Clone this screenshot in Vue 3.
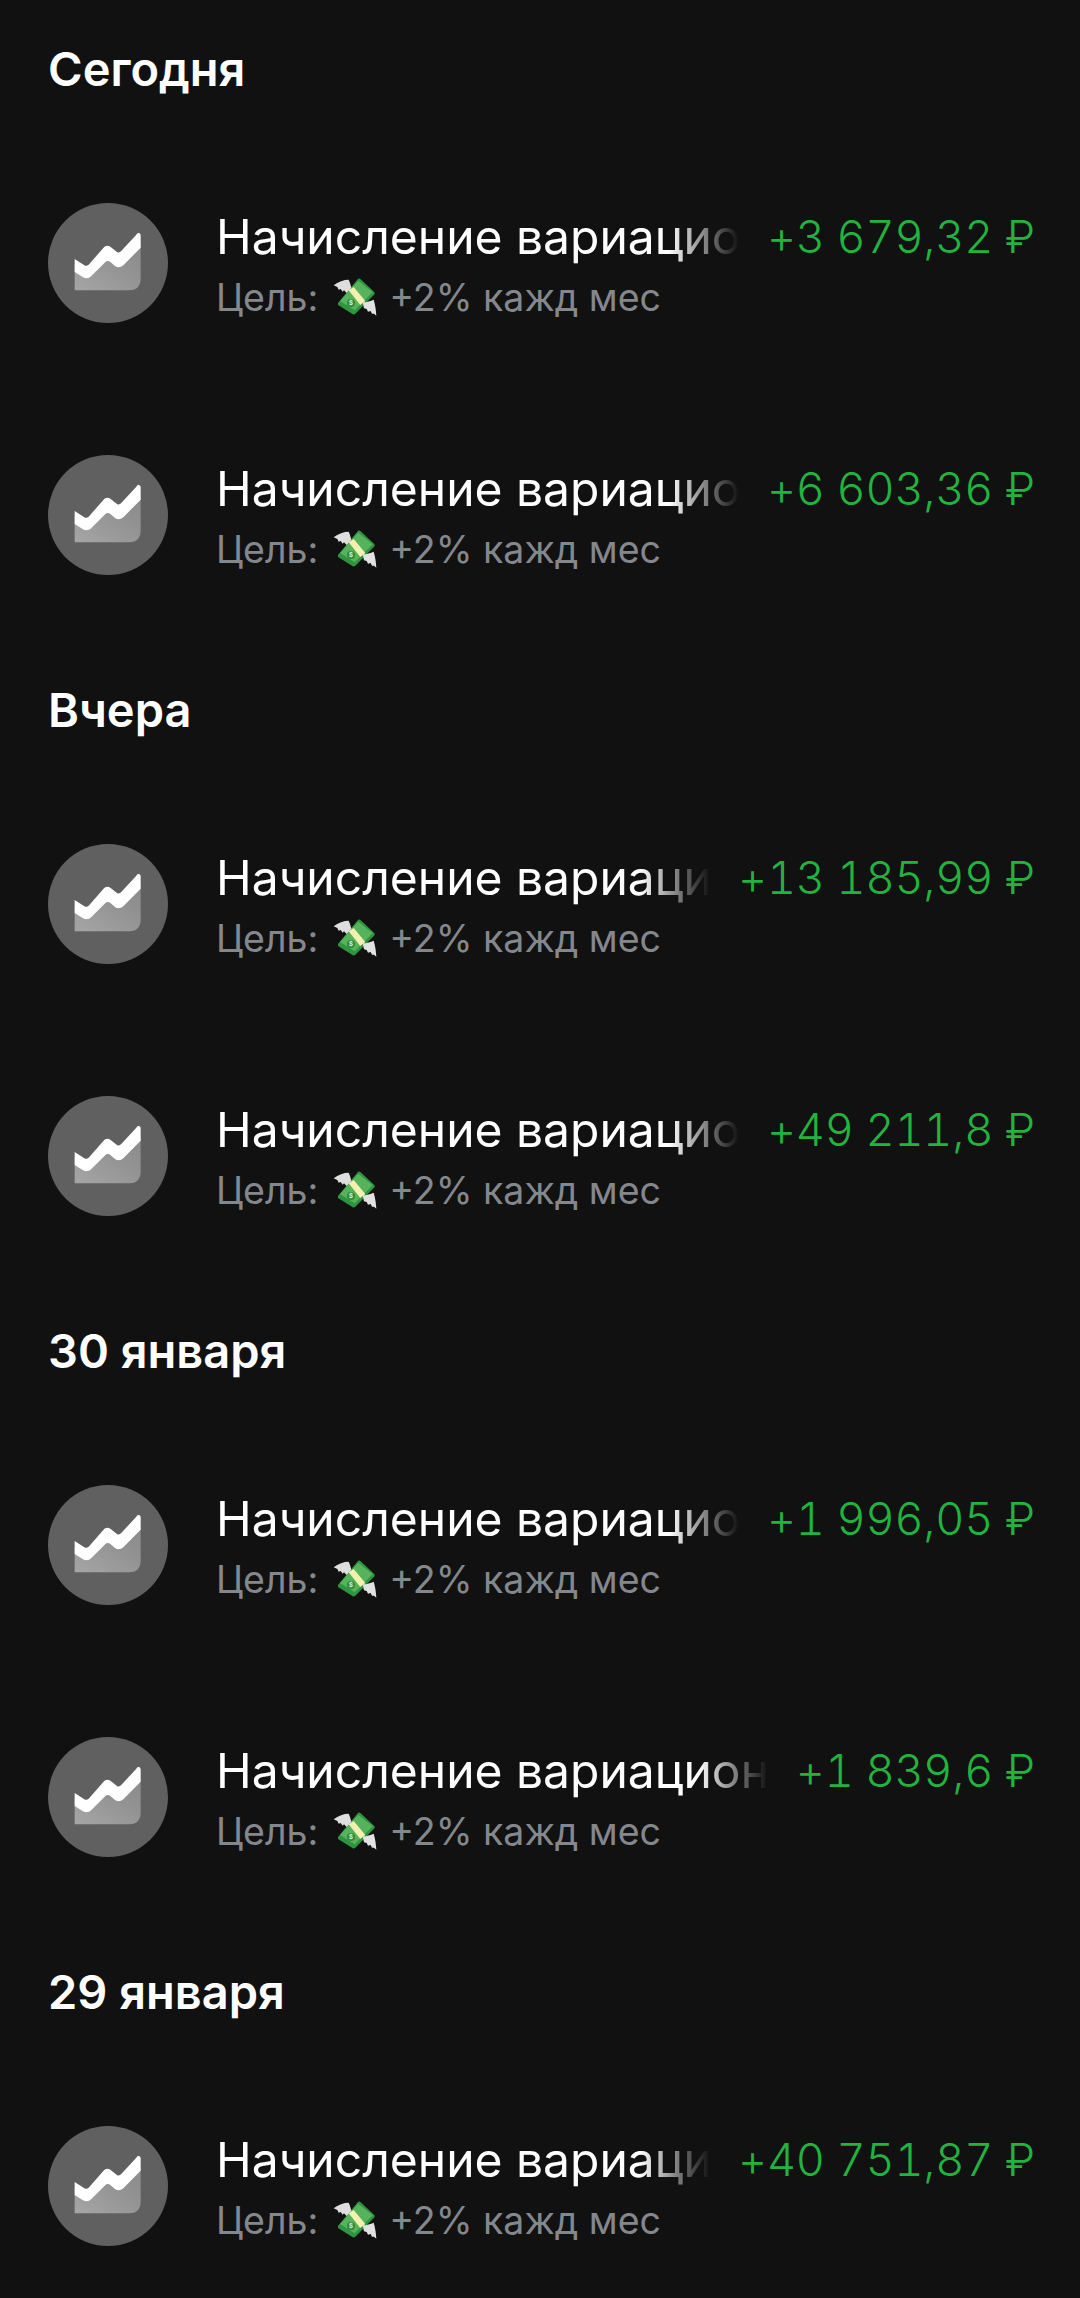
<template>
  <div class="page">
    <section v-for="group in groups" :key="group.title" class="group">
      <h2 class="group-title">{{ group.title }}</h2>
      <div v-for="(amount, i) in group.items" :key="i" class="row">
        <div class="avatar">
          <svg viewBox="0 0 360 360" width="120" height="120">
            <circle cx="180" cy="180" r="180" fill="#606060" />
            <path
              d="M80 185 L80 262 L245 262 C266 262 278 248 278 228 L278 125 L215 190 L180 172 L117 226 Z"
              fill="url(#area)"
            />
            <path
              d="M80 168 L108 186 C113 190 118 189 122 185 L166 135 C172 127 180 126 187 131 L206 146 C211 150 215 149 219 145 L265 95 C271 87 278 90 278 98 L278 134 L226 187 C218 194 209 195 201 189 L187 177 C182 173 177 173 172 178 L130 219 C123 226 114 228 105 223 L80 207 Z"
              fill="#fff"
            />
            <defs>
              <linearGradient id="area" x1="0" y1="1" x2="1" y2="0">
                <stop offset="0" stop-color="#a6a6a6" />
                <stop offset="0.6" stop-color="#939393" />
                <stop offset="1" stop-color="#8a8a8a" />
              </linearGradient>
            </defs>
          </svg>
        </div>
        <div class="info">
          <div class="name">Начисление вариационной маржи</div>
          <div class="goal">
            <span>Цель:</span>
            <svg class="emoji" viewBox="0 0 135 120" width="45" height="40">
              <path d="M18 78 L76 8 C79 4 83 4 86 7 L126 44 C129 47 129 50 126 53 L70 110 C67 113 63 113 60 110 L18 84 Z" fill="#2e9440" />
              <path d="M24 72 L79 11 L122 46 L68 100 Z" fill="#55b35c" />
              <path d="M50 40 L65 30 L100 72 L85 84 Z" fill="#f5efb0" />
              <circle cx="57" cy="78" r="12" fill="#2f8a3c" />
              <text x="57" y="85" class="dollar">$</text>
              <path d="M5 25 C18 14 36 8 50 8 C54 16 56 24 58 32 L44 48 L36 40 L32 44 L26 36 L20 38 L16 30 Z" fill="#dedede" />
              <path d="M92 76 C104 76 116 72 125 68 C130 84 132 100 133 116 L126 110 L120 110 L116 102 L108 104 L104 96 L96 94 Z" fill="#e2e2e2" />
            </svg>
            <span>+2% кажд мес</span>
          </div>
        </div>
        <div class="amount">{{ amount }}<span class="currency">₽</span></div>
      </div>
    </section>
  </div>
</template>

<script setup>
const groups = [
  { title: 'Сегодня', items: ['+3 679,32', '+6 603,36'] },
  { title: 'Вчера', items: ['+13 185,99', '+49 211,8'] },
  { title: '30 января', items: ['+1 996,05', '+1 839,6'] },
  { title: '29 января', items: ['+40 751,87'] }
]
</script>

<style>
html,
body {
  background: #111112;
}
</style>

<style scoped>
.page {
  height: 2298px;
  overflow: hidden;
  background: #111112;
  font-family: Inter, "Noto Sans", sans-serif;
  padding: 40px 45px 0 48px;
  box-sizing: border-box;
}

.group {
  padding-bottom: 106px;
}

.group-title {
  margin: 0;
  height: 58px;
  line-height: 58px;
  font-size: 47px;
  font-weight: 600;
  color: #fff;
}

.row {
  display: flex;
  align-items: flex-start;
  height: 120px;
  margin-top: 105px;
}

.row + .row {
  margin-top: 132px;
}

.avatar {
  flex-shrink: 0;
  width: 120px;
  height: 120px;
  margin-right: 48px;
}

.info {
  flex: 1;
  min-width: 0;
  padding-top: 6px;
}

.name {
  margin-right: 28px;
  height: 56px;
  line-height: 56px;
  font-size: 48px;
  color: #fff;
  white-space: nowrap;
  overflow: hidden;
  -webkit-mask-image: linear-gradient(to left, transparent 0, #000 70px);
  mask-image: linear-gradient(to left, transparent 0, #000 70px);
}

.goal {
  display: flex;
  align-items: center;
  gap: 12px;
  height: 44px;
  margin-top: 10px;
  font-size: 37.5px;
  color: #84878c;
  white-space: nowrap;
}

.emoji {
  flex-shrink: 0;
  margin-left: 2px;
}

.dollar {
  font-size: 20px;
  font-weight: 700;
  fill: #d8f0d0;
  text-anchor: middle;
}

.amount {
  flex-shrink: 0;
  height: 56px;
  line-height: 56px;
  margin-top: 6px;
  font-size: 45px;
  font-variant-numeric: tabular-nums;
  font-weight: 350;
  letter-spacing: -0.2px;
  color: #22b33f;
  white-space: pre;
}

.currency {
  margin-left: 12px;
}
</style>
